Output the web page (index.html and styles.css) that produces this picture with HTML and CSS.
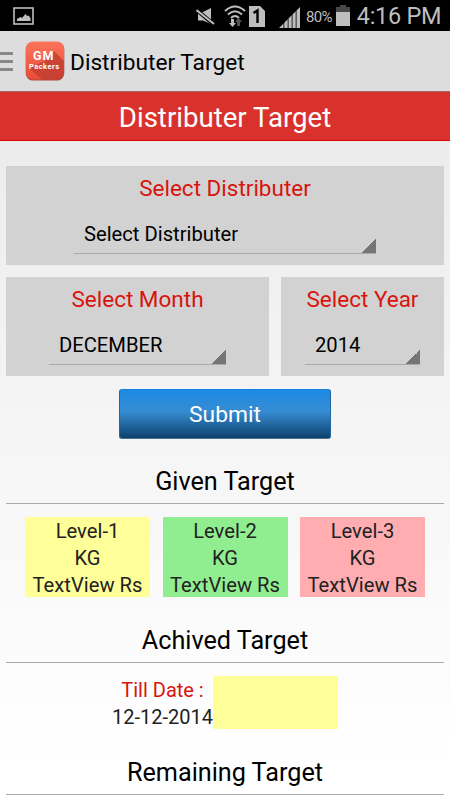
FILE: index.html
```html
<!DOCTYPE html>
<html lang="en">
<head>
  <meta charset="UTF-8" />
  <meta name="viewport" content="width=device-width, initial-scale=1.0"/>
  <title>Distributer Target</title>
  <link rel="stylesheet" href="styles.css">
</head>
<body>
  <div class="status-bar">
    <svg class="icon-picture" viewBox="0 0 21 18" width="21" height="18">
      <rect x="1" y="1" width="19" height="16" fill="none" stroke="#bebebe" stroke-width="1.6"/>
      <path d="M4 14V12L7.500 10L9 11L12.500 7L14 9L15.500 8.500L17.500 11V14Z" fill="#bebebe"/>
    </svg>
    <svg class="icon-mute" viewBox="0 0 20 18" width="20" height="18">
      <path d="M2 4H7L15 0V16L7 12.500H2Z" fill="#bebebe"/>
      <path d="M0 1.500L18 16.500" stroke="#000" stroke-width="4"/>
      <path d="M0.500 2L18 16" stroke="#bebebe" stroke-width="2"/>
    </svg>
    <svg class="icon-wifi" viewBox="0 0 22 22" width="22" height="22">
      <g fill="none" stroke="#bebebe" stroke-width="2">
        <path d="M1 6Q11 -3 21 6"/>
        <path d="M4 9.500Q11 3 18 9.500"/>
        <path d="M7 13Q11 9 15 13"/>
      </g>
      <path d="M7 14H10V18H12L8.500 22L5 18H7Z" fill="#bebebe"/>
      <path d="M13 21V17H11L14.500 12.500L18 17H16V21Z" fill="#555"/>
    </svg>
    <svg class="icon-sim" viewBox="0 0 16 21" width="16" height="21">
      <path d="M0 0H11L16 5V21H0Z" fill="#bebebe"/>
      <path d="M4.500 7L8.500 4.500V17" fill="none" stroke="#000" stroke-width="2.400"/>
    </svg>
    <svg class="icon-signal" viewBox="0 0 21 21" width="21" height="21">
      <path d="M0 21L4.500 16.500V21ZM5.300 21V15.700L8.700 12.300V21ZM9.500 21V11.500L12.700 8.300V21ZM13.500 21V7.500L16.700 4.300V21ZM17.500 21V3.500L21 0V21Z" fill="#bebebe"/>
    </svg>
    <span class="battery-level">80%</span>
    <svg class="icon-battery" viewBox="0 0 14 21" width="14" height="21">
      <path d="M4 0H10V2H14V7H0V2H4Z" fill="#484848"/>
      <rect y="7" width="14" height="14" fill="#bebebe"/>
    </svg>
    <span class="clock">4:16 PM</span>
  </div>

  <div class="action-bar">
    <svg class="menu-icon" viewBox="0 0 13 20" width="13" height="20">
      <path d="M0 2.500H13M0 10.500H13M0 18.500H13" stroke="#898989" stroke-width="2.800"/>
    </svg>
    <svg class="app-icon" viewBox="0 0 40 40" width="40" height="40">
      <defs>
        <linearGradient id="app-bg" x1="0" y1="0" x2="0" y2="1">
          <stop offset="0" stop-color="#fc745b"/>
          <stop offset="1" stop-color="#e84a37"/>
        </linearGradient>
        <clipPath id="app-clip"><rect x="1" y="0.500" width="38" height="38" rx="7"/></clipPath>
      </defs>
      <rect x="0.700" y="1" width="38.600" height="38.600" rx="7.500" fill="#a8483d"/>
      <g clip-path="url(#app-clip)">
        <rect width="40" height="40" fill="url(#app-bg)"/>
        <path d="M29 10L40 21V40H19L4 27L20 20Z" fill="#b93b2d" opacity="0.700"/>
      </g>
      <text class="app-icon-title" x="8" y="18.500">GM</text>
      <text class="app-icon-name" x="4" y="27.500">Packers</text>
    </svg>
    <h1 class="app-title">Distributer Target</h1>
  </div>

  <h2 class="page-title">Distributer Target</h2>

  <div class="content">
    <div class="panel panel-distributer">
      <div class="panel-label">Select Distributer</div>
      <div class="spinner">Select Distributer</div>
    </div>

    <div class="panel-row">
      <div class="panel panel-month">
        <div class="panel-label">Select Month</div>
        <div class="spinner">DECEMBER</div>
      </div>
      <div class="panel panel-year">
        <div class="panel-label">Select Year</div>
        <div class="spinner">2014</div>
      </div>
    </div>

    <button class="submit">Submit</button>

    <h3 class="section-title">Given Target</h3>
    <div class="levels">
      <div class="level level-1">Level-1<br>KG<br>TextView Rs</div>
      <div class="level level-2">Level-2<br>KG<br>TextView Rs</div>
      <div class="level level-3">Level-3<br>KG<br>TextView Rs</div>
    </div>

    <h3 class="section-title">Achived Target</h3>
    <div class="achieved">
      <div class="till-date">
        <div class="till-label">Till Date :</div>
        <div class="till-value">12-12-2014</div>
      </div>
      <div class="achieved-value"></div>
    </div>

    <h3 class="section-title">Remaining Target</h3>
  </div>
</body>
</html>
```
FILE: styles.css
```css
:root {
  --red: #d9140d;
  --banner: #d9312b;
  --panel: #d2d2d2;
  --line: #aaaaaa;
  --yellow: #ffff99;
  --green: #90ee90;
  --pink: #ffadb1;
  --status: #bebebe;
}

* {
  box-sizing: border-box;
  margin: 0;
  padding: 0;
}

body {
  height: 800px;
  overflow: hidden;
  font-family: Roboto, sans-serif;
  color: #000;
  background: linear-gradient(#e8e8e8, #ffffff 760px);
}

.status-bar {
  display: flex;
  height: 31px;
  padding: 0 9px 0 13px;
  background: #000;
  color: var(--status);
}

.status-bar svg {
  flex: none;
}

.icon-picture {
  margin-top: 7px;
}

.icon-mute {
  margin: 8px 0 0 162px;
}

.icon-wifi {
  margin: 5px 0 0 8px;
}

.icon-sim {
  margin: 6px 0 0 3px;
}

.icon-signal {
  margin: 7px 0 0 14px;
}

.battery-level {
  width: 27px;
  margin-left: 6px;
  font-size: 15px;
  line-height: 34px;
  letter-spacing: -0.7px;
}

.icon-battery {
  margin: 5px 0 0 4px;
}

.clock {
  margin-left: 7px;
  font-size: 23.5px;
  line-height: 32px;
  letter-spacing: -0.3px;
  white-space: nowrap;
}

.action-bar {
  display: flex;
  align-items: center;
  height: 61px;
  background: #dddddd;
  border-bottom: 1px solid #a3625f;
}

.app-icon {
  margin-left: 12px;
}

.app-icon text {
  fill: #fff;
  font-weight: 700;
}

.app-icon-title {
  font-size: 12.5px;
  letter-spacing: 1px;
}

.app-icon-name {
  font-size: 7.5px;
  letter-spacing: 0.45px;
}

.app-title {
  margin-left: 5px;
  padding-top: 2px;
  font-size: 22.7px;
  font-weight: 400;
}

.page-title {
  height: 49px;
  background: var(--banner);
  border-bottom: 1px solid #e00000;
  color: #fff;
  font-size: 27.6px;
  font-weight: 400;
  line-height: 51px;
  text-align: center;
}

.content {
  display: flex;
  flex-direction: column;
  padding: 25px 6px 0;
}

.panel {
  display: flex;
  flex-direction: column;
  height: 99px;
  background: var(--panel);
}

.panel-row {
  display: grid;
  grid-template-columns: 263px 163px;
  gap: 12px;
  margin-top: 12px;
}

.panel-label {
  height: 44px;
  color: var(--red);
  font-size: 22.5px;
  line-height: 45px;
  text-align: center;
}

.spinner {
  height: 44px;
  padding-left: 10px;
  border-bottom: 1px solid var(--line);
  background: linear-gradient(135deg, transparent 50%, #757575 50%) right bottom / 15px 15px no-repeat border-box;
  font-size: 20.2px;
  line-height: 49px;
}

.panel-distributer .spinner {
  margin: 0 68px;
}

.panel-month .spinner {
  margin: 0 43px;
}

.panel-year .spinner {
  margin: 0 24px;
}

.submit {
  width: 212px;
  height: 50px;
  margin: 13px auto 0;
  border: 1px solid #23669f;
  border-top-color: #1881dc;
  border-bottom-color: #4b6f8c;
  border-radius: 3px;
  background: linear-gradient(#1d8ae4, #368cd2 45%, #0d416c);
  color: #fff;
  font-family: inherit;
  font-size: 22.8px;
  line-height: 50px;
}

.section-title {
  height: 46px;
  margin-top: 19px;
  border-bottom: 1px solid var(--line);
  font-size: 25.2px;
  font-weight: 400;
  line-height: 48px;
  text-align: center;
}

.levels {
  display: grid;
  grid-template-columns: repeat(3, 125px);
  justify-content: center;
  gap: 12.5px;
  margin-top: 13px;
}

.level {
  height: 80px;
  padding-top: 1px;
  color: #222;
  font-size: 20.2px;
  line-height: 27px;
  text-align: center;
}

.level-1 {
  background: var(--yellow);
}

.level-2 {
  background: var(--green);
}

.level-3 {
  background: var(--pink);
}

.levels + .section-title {
  margin-top: 20px;
}

.achieved {
  display: flex;
  justify-content: center;
  height: 53px;
  margin-top: 13px;
}

.achieved + .section-title {
  margin-top: 20px;
}

.till-date {
  width: 101px;
  padding-top: 1px;
  font-size: 20px;
  line-height: 27px;
  text-align: center;
  white-space: nowrap;
}

.till-label {
  color: var(--red);
}

.till-value {
  color: #222;
}

.achieved-value {
  width: 125px;
  background: var(--yellow);
}
```
